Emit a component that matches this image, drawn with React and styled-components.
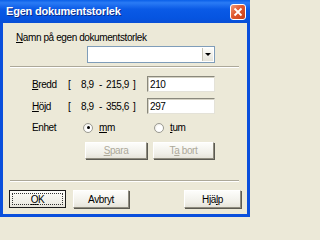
import styled, { createGlobalStyle } from "styled-components";

const GlobalStyle = createGlobalStyle`
  html, body {
    margin: 0;
    padding: 0;
    background: #ece9d8;
  }
  body {
    font-family: "Liberation Sans", Arial, sans-serif;
    font-size: 10px;
    letter-spacing: -0.4px;
    color: #000;
  }
`;

const Window = styled.div`
  width: 250px;
  height: 217px;
  display: flex;
  flex-direction: column;
  background: #0a4fdc;
  overflow: hidden;
`;

const TitleBar = styled.div`
  height: 23px;
  flex: none;
  display: flex;
  align-items: center;
  justify-content: space-between;
  padding: 0 4px 1px 6px;
  box-sizing: border-box;
  background: linear-gradient(
    to bottom,
    #0a5fe8 0%,
    #2a7bf5 12%,
    #0a5ae6 40%,
    #0654e0 80%,
    #0a4fd6 100%
  );
`;

const Title = styled.span`
  color: #fff;
  font-weight: bold;
  font-size: 11px;
  letter-spacing: -0.2px;
  text-shadow: 1px 1px 0 #0a2c8c;
`;

const CloseButton = styled.div`
  width: 14px;
  height: 14px;
  margin-top: 2px;
  border: 1px solid #fff;
  border-radius: 3px;
  background: linear-gradient(135deg, #f09a7a 0%, #e0582e 45%, #c8401a 100%);
  display: flex;
  align-items: center;
  justify-content: center;
`;

const Frame = styled.div`
  flex: 1;
  margin: 0 3px 3px;
  background: #ece9d8;
  display: flex;
  flex-direction: column;
`;

const Key = styled.span`
  text-decoration: underline;
  text-underline-offset: 1px;
`;

const FieldLabel = styled.div`
  margin: 8px 0 0 13px;
  line-height: 13px;
`;

const Combo = styled.div`
  margin: 2px 0 0 84px;
  width: 128px;
  height: 17px;
  box-sizing: border-box;
  border: 1px solid #7f9db9;
  background: #fff;
  display: flex;
  justify-content: flex-end;
  padding: 1px;
`;

const ComboArrow = styled.div`
  width: 10px;
  background: linear-gradient(#fdfdfb, #e6e4da);
  border-left: 1px solid #c6c3b5;
  display: flex;
  align-items: center;
  justify-content: center;
  &::after {
    content: "";
    border-left: 3px solid transparent;
    border-right: 3px solid transparent;
    border-top: 3px solid #000;
  }
`;

const Separator = styled.div`
  margin: ${(p) => p.$top}px 8px 0 7px;
  height: 0;
  border-top: 1px solid #aca899;
  border-bottom: 1px solid #fff;
`;

const Grid = styled.div`
  margin: 8px 0 0 29px;
  display: grid;
  grid-template-columns: 36px 13px 18px 7px 27px 14px 68px;
  grid-auto-rows: 16px;
  row-gap: 6px;
  align-items: center;
  white-space: nowrap;
`;

const TextInput = styled.div`
  height: 16px;
  box-sizing: border-box;
  border-top: 1px solid #8a887c;
  border-left: 1px solid #8a887c;
  border-right: 1px solid #e4e2d8;
  border-bottom: 1px solid #e4e2d8;
  box-shadow: inset 1px 1px 0 #d5d2c4;
  background: #fff;
  padding: 1px 0 0 2px;
  line-height: 13px;
`;

const UnitRow = styled.div`
  margin: 7px 0 0 29px;
  height: 13px;
  display: flex;
  align-items: center;
`;

const UnitLabel = styled.span`
  width: 51px;
`;

const RadioOption = styled.label`
  display: flex;
  align-items: center;
  gap: 6px;
  width: ${(p) => p.$width}px;
`;

const RadioDot = styled.span`
  width: 10px;
  height: 10px;
  box-sizing: border-box;
  border-radius: 50%;
  border: 1px solid #9b9a92;
  background: radial-gradient(circle at 60% 60%, #fff 40%, #e4e2d8 100%);
  display: flex;
  align-items: center;
  justify-content: center;
  &::after {
    content: "";
    width: 3px;
    height: 3px;
    border-radius: 50%;
    background: ${(p) => (p.$checked ? "#000" : "transparent")};
  }
`;

const ButtonRow = styled.div`
  display: flex;
  gap: ${(p) => p.$gap || 6}px;
  margin: ${(p) => p.$top}px 0 0 ${(p) => p.$left}px;
`;

const Button = styled.div`
  width: ${(p) => p.$width}px;
  height: ${(p) => p.$height || 17}px;
  box-sizing: border-box;
  display: flex;
  align-items: center;
  justify-content: center;
  background: linear-gradient(#fdfdfb, #f0efe8 70%, #e6e4da);
  border-top: 1px solid #fff;
  border-left: 1px solid #fff;
  border-right: 1px solid #8e8b7e;
  border-bottom: 1px solid #8e8b7e;
  box-shadow: 1px 1px 0 #5b5a52;
  color: ${(p) => (p.$disabled ? "#aca899" : "#000")};
  margin-left: ${(p) => p.$push || 0}px;
`;

const DefaultButton = styled(Button)`
  border: 1px solid #1a1a1a;
  box-shadow: none;
  padding: 2px;
  & > span {
    flex: 1;
    align-self: stretch;
    display: flex;
    align-items: center;
    justify-content: center;
    outline: 1px dotted #333;
    outline-offset: -1px;
  }
`;

const CloseIcon = () => (
  <svg width="10" height="10" viewBox="0 0 10 10">
    <path d="M1.5 1.5 L8.5 8.5 M8.5 1.5 L1.5 8.5" stroke="#fff" strokeWidth="1.8" />
  </svg>
);

export default function App() {
  return (
    <>
      <GlobalStyle />
      <Window>
        <TitleBar>
          <Title>Egen dokumentstorlek</Title>
          <CloseButton>
            <CloseIcon />
          </CloseButton>
        </TitleBar>
        <Frame>
          <FieldLabel>
            <Key>N</Key>amn på egen dokumentstorlek
          </FieldLabel>
          <Combo>
            <ComboArrow />
          </Combo>
          <Separator $top={3} />
          <Grid>
            <span>
              <Key>B</Key>redd
            </span>
            <span>[</span>
            <span>8,9</span>
            <span>-</span>
            <span>215,9</span>
            <span>]</span>
            <TextInput>210</TextInput>
            <span>
              <Key>H</Key>öjd
            </span>
            <span>[</span>
            <span>8,9</span>
            <span>-</span>
            <span>355,6</span>
            <span>]</span>
            <TextInput>297</TextInput>
          </Grid>
          <UnitRow>
            <UnitLabel>Enhet</UnitLabel>
            <RadioOption $width={71}>
              <RadioDot $checked />
              <span>
                <Key>m</Key>m
              </span>
            </RadioOption>
            <RadioOption>
              <RadioDot />
              <span>
                <Key>t</Key>um
              </span>
            </RadioOption>
          </UnitRow>
          <ButtonRow $top={8} $left={82}>
            <Button $width={62} $disabled>
              <span>
                <Key>S</Key>para
              </span>
            </Button>
            <Button $width={61} $disabled>
              <span>
                T<Key>a</Key> bort
              </span>
            </Button>
          </ButtonRow>
          <Separator $top={21} />
          <ButtonRow $top={8} $left={6} $gap={7}>
            <DefaultButton $width={57} $height={18}>
              <span>
                <Key>O</Key>K
              </span>
            </DefaultButton>
            <Button $width={56} $height={18}>
              Avbryt
            </Button>
            <Button $width={57} $height={18} $push={48}>
              <span>
                Hjä<Key>l</Key>p
              </span>
            </Button>
          </ButtonRow>
        </Frame>
      </Window>
    </>
  );
}
